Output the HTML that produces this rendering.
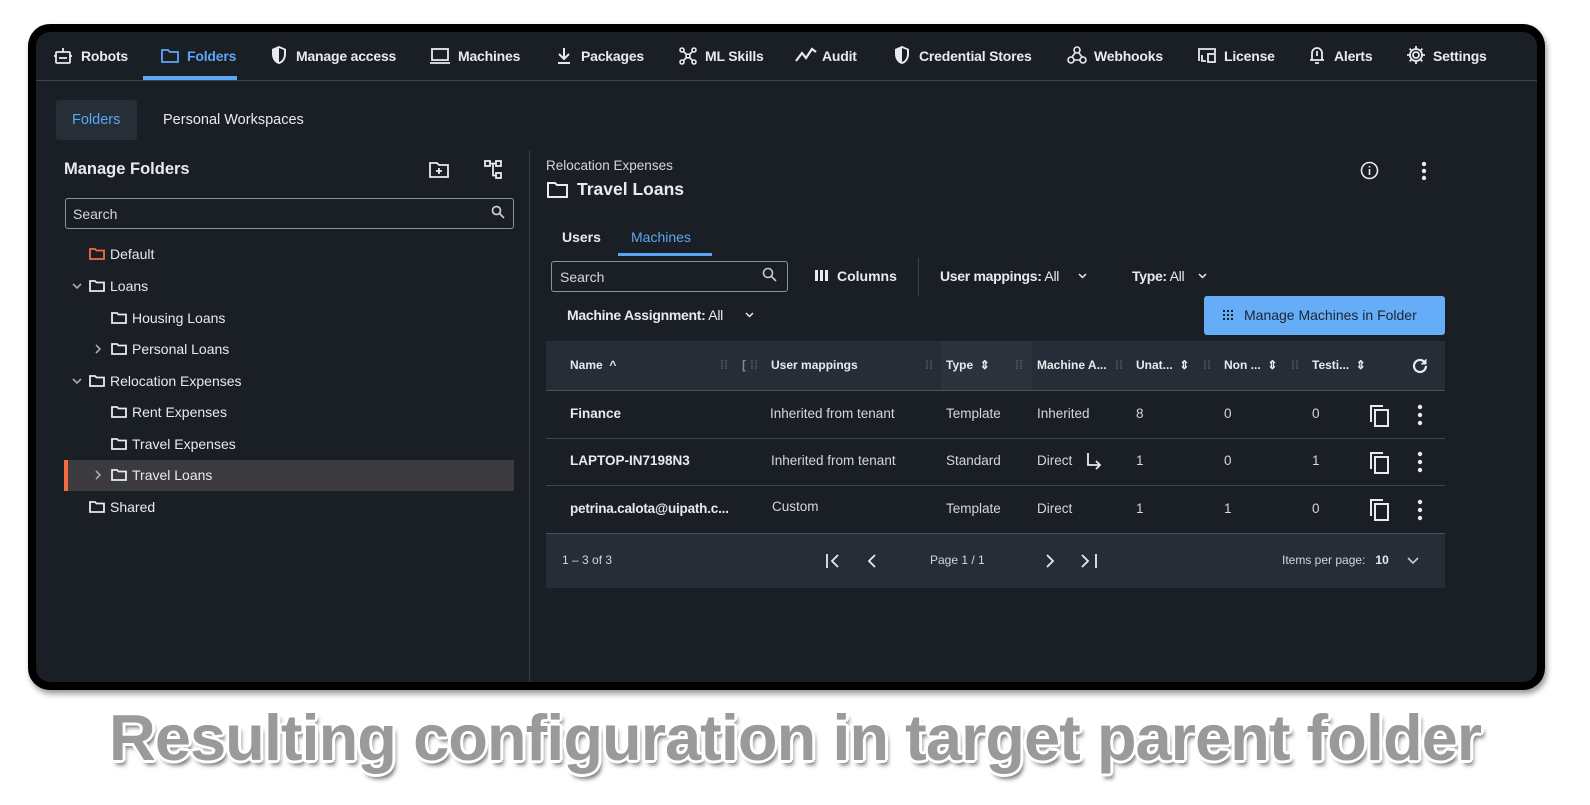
<!DOCTYPE html>
<html><head><meta charset="utf-8"><style>
*{box-sizing:border-box;margin:0;padding:0}
html,body{width:1590px;height:805px;overflow:hidden;background:#fff}
#root{position:relative;width:1590px;height:805px;overflow:hidden;background:#fff;font-family:"Liberation Sans",sans-serif;color:#e8eaed}
.frame{position:absolute;left:28px;top:24px;width:1517px;height:666px;background:#000;border-radius:22px;box-shadow:2px 4px 6px rgba(0,0,0,.4)}
.app{position:absolute;left:36px;top:32px;width:1501px;height:650px;background:#1a1f26;border-radius:14px;overflow:hidden}
.a{position:absolute;white-space:nowrap}
.nav{font-size:14px;font-weight:bold;color:#e8eaed;top:48px;letter-spacing:-0.2px}
svg{position:absolute}
.tree{font-size:14px;color:#e8eaed}
.th{font-size:12px;font-weight:bold;color:#e8eaed;top:358px}
.td{font-size:13.5px;color:#d4d7db}
.sep{position:absolute;height:1px;background:#3a434e}
</style></head><body><div id="root">
<div class="frame"></div>
<div class="app"></div>

<svg style="left:53px;top:46px" width="20" height="20" viewBox="0 0 20 20" fill="none" stroke="#e8eaed" stroke-width="1.8"><rect x="3" y="6" width="14" height="11" rx="1"/><line x1="10" y1="2" x2="10" y2="6"/><line x1="6" y1="12" x2="14" y2="12"/><line x1="1" y1="10" x2="3" y2="10"/><line x1="17" y1="10" x2="19" y2="10"/></svg>
<div class="a nav" style="left:81px">Robots</div>
<svg style="left:160px;top:47px" width="20" height="18" viewBox="0 0 20 18" fill="none" stroke="#5aa7f5" stroke-width="1.8"><path d="M2 3h6l2 2h8v10H2z"/></svg>
<div class="a nav" style="left:187px;color:#5aa7f5">Folders</div>
<div class="a" style="left:143px;top:76px;width:94px;height:4px;background:#5aa7f5"></div>
<svg style="left:270px;top:45px" width="18" height="20" viewBox="0 0 18 20"><path d="M9 1L2 4v5c0 5 3 9 7 10 4-1 7-5 7-10V4z" fill="#e8eaed"/><path d="M9 3v14c3-1 5-4 5-8V5z" fill="#1a1f26"/></svg>
<div class="a nav" style="left:296px">Manage access</div>
<svg style="left:429px;top:47px" width="22" height="18" viewBox="0 0 22 18" fill="none" stroke="#e8eaed" stroke-width="1.8"><rect x="3" y="2" width="16" height="11"/><line x1="1" y1="16" x2="21" y2="16"/></svg>
<div class="a nav" style="left:458px">Machines</div>
<svg style="left:556px;top:46px" width="16" height="20" viewBox="0 0 16 20" fill="none" stroke="#e8eaed" stroke-width="2"><path d="M8 2v10M3 8l5 5 5-5M2 17h12"/></svg>
<div class="a nav" style="left:581px">Packages</div>
<svg style="left:678px;top:46px" width="20" height="20" viewBox="0 0 20 20" fill="none" stroke="#e8eaed" stroke-width="1.6"><circle cx="4" cy="4" r="2"/><circle cx="16" cy="4" r="2"/><circle cx="10" cy="10" r="2"/><circle cx="4" cy="16" r="2"/><circle cx="16" cy="16" r="2"/><path d="M5.5 5.5l3 3M14.5 5.5l-3 3M5.5 14.5l3-3M14.5 14.5l-3-3"/></svg>
<div class="a nav" style="left:705px">ML Skills</div>
<svg style="left:795px;top:47px" width="22" height="16" viewBox="0 0 22 16" fill="none" stroke="#e8eaed" stroke-width="2.2"><path d="M1 14l6-8 4 5 6-9 4 3"/></svg>
<div class="a nav" style="left:822px">Audit</div>
<svg style="left:893px;top:45px" width="18" height="20" viewBox="0 0 18 20"><path d="M9 1L2 4v5c0 5 3 9 7 10 4-1 7-5 7-10V4z" fill="#e8eaed"/><path d="M9 3v14c3-1 5-4 5-8V5z" fill="#1a1f26"/></svg>
<div class="a nav" style="left:919px">Credential Stores</div>
<svg style="left:1067px;top:45px" width="20" height="20" viewBox="0 0 20 20" fill="none" stroke="#e8eaed" stroke-width="1.6"><circle cx="10" cy="5" r="3"/><circle cx="4" cy="15" r="3"/><circle cx="16" cy="15" r="3"/><path d="M8 8l-3 4M12 8l3 4M7 15h6"/></svg>
<div class="a nav" style="left:1094px">Webhooks</div>
<svg style="left:1196px;top:46px" width="22" height="18" viewBox="0 0 22 18" fill="none" stroke="#e8eaed" stroke-width="1.8"><path d="M3 15V3h16v4"/><rect x="12" y="8" width="7" height="8"/><path d="M6 9v6h4"/></svg>
<div class="a nav" style="left:1224px">License</div>
<svg style="left:1308px;top:45px" width="18" height="20" viewBox="0 0 18 20" fill="none" stroke="#e8eaed" stroke-width="1.8"><path d="M4 15V8a5 5 0 0 1 10 0v7M2 15h14M7 18h4M9 6v5"/></svg>
<div class="a nav" style="left:1334px">Alerts</div>
<svg style="left:1406px;top:45px" width="20" height="20" viewBox="0 0 20 20" fill="none" stroke="#e8eaed" stroke-width="1.8"><circle cx="10" cy="10" r="3"/><path d="M10 1v3M10 16v3M1 10h3M16 10h3M3.6 3.6l2.1 2.1M14.3 14.3l2.1 2.1M3.6 16.4l2.1-2.1M14.3 5.7l2.1-2.1"/><circle cx="10" cy="10" r="6"/></svg>
<div class="a nav" style="left:1433px">Settings</div>
<div class="sep" style="left:36px;top:80px;width:1501px;background:#3c4550"></div>

<div class="a" style="left:56px;top:100px;width:81px;height:40px;background:#262e38;border-radius:3px"></div>
<div class="a" style="left:72px;top:112px;font-size:14.5px;color:#5aa7f5">Folders</div>
<div class="a" style="left:163px;top:112px;font-size:14.5px;color:#e8eaed">Personal Workspaces</div>

<div class="a" style="left:64px;top:160px;font-size:16.5px;font-weight:bold">Manage Folders</div>
<svg style="left:428px;top:160px" width="22" height="20" viewBox="0 0 22 20" fill="none" stroke="#e8eaed" stroke-width="1.8"><path d="M2 3h7l2 2h9v12H2z"/><path d="M11 8v6M8 11h6"/></svg>
<svg style="left:483px;top:159px" width="22" height="22" viewBox="0 0 22 22" fill="none" stroke="#e8eaed" stroke-width="1.8"><rect x="2" y="2" width="5" height="5"/><rect x="13" y="2" width="5" height="5"/><rect x="13" y="14" width="5" height="5"/><path d="M7 4.5h6M10 4.5v12h3"/></svg>
<div class="a" style="left:65px;top:198px;width:449px;height:31px;border:1px solid #8a929c;border-radius:3px"></div>
<div class="a" style="left:73px;top:206px;font-size:14px;color:#d4d7db">Search</div>
<svg style="left:491px;top:205px" width="14" height="14" viewBox="0 0 14 14" fill="none" stroke="#c8ccd1" stroke-width="1.8"><circle cx="5.5" cy="5.5" r="4"/><path d="M8.5 8.5l4.5 4.5"/></svg>

<div class="a" style="left:64px;top:460px;width:450px;height:31px;background:#3b3a3f"></div>
<div class="a" style="left:64px;top:460px;width:4px;height:31px;background:#f26b43"></div>

<svg style="left:89px;top:247px" width="16" height="14" viewBox="0 0 16 14" fill="none" stroke="#f26b43" stroke-width="1.8"><path d="M1 2h5l1.5 1.5H15V12H1z"/></svg>
<div class="a tree" style="left:110px;top:246px">Default</div>
<svg style="left:72px;top:283px" width="10" height="7" viewBox="0 0 10 7" fill="none" stroke="#aaa" stroke-width="1.6"><path d="M1 1l4 4 4-4"/></svg>
<svg style="left:89px;top:279px" width="16" height="14" viewBox="0 0 16 14" fill="none" stroke="#e8eaed" stroke-width="1.8"><path d="M1 2h5l1.5 1.5H15V12H1z"/></svg>
<div class="a tree" style="left:110px;top:278px">Loans</div>
<svg style="left:111px;top:311px" width="16" height="14" viewBox="0 0 16 14" fill="none" stroke="#e8eaed" stroke-width="1.8"><path d="M1 2h5l1.5 1.5H15V12H1z"/></svg>
<div class="a tree" style="left:132px;top:310px">Housing Loans</div>
<svg style="left:95px;top:344px" width="7" height="10" viewBox="0 0 7 10" fill="none" stroke="#aaa" stroke-width="1.6"><path d="M1 1l4 4-4 4"/></svg>
<svg style="left:111px;top:342px" width="16" height="14" viewBox="0 0 16 14" fill="none" stroke="#e8eaed" stroke-width="1.8"><path d="M1 2h5l1.5 1.5H15V12H1z"/></svg>
<div class="a tree" style="left:132px;top:341px">Personal Loans</div>
<svg style="left:72px;top:378px" width="10" height="7" viewBox="0 0 10 7" fill="none" stroke="#aaa" stroke-width="1.6"><path d="M1 1l4 4 4-4"/></svg>
<svg style="left:89px;top:374px" width="16" height="14" viewBox="0 0 16 14" fill="none" stroke="#e8eaed" stroke-width="1.8"><path d="M1 2h5l1.5 1.5H15V12H1z"/></svg>
<div class="a tree" style="left:110px;top:373px">Relocation Expenses</div>
<svg style="left:111px;top:405px" width="16" height="14" viewBox="0 0 16 14" fill="none" stroke="#e8eaed" stroke-width="1.8"><path d="M1 2h5l1.5 1.5H15V12H1z"/></svg>
<div class="a tree" style="left:132px;top:404px">Rent Expenses</div>
<svg style="left:111px;top:437px" width="16" height="14" viewBox="0 0 16 14" fill="none" stroke="#e8eaed" stroke-width="1.8"><path d="M1 2h5l1.5 1.5H15V12H1z"/></svg>
<div class="a tree" style="left:132px;top:436px">Travel Expenses</div>
<svg style="left:95px;top:470px" width="7" height="10" viewBox="0 0 7 10" fill="none" stroke="#aaa" stroke-width="1.6"><path d="M1 1l4 4-4 4"/></svg>
<svg style="left:111px;top:468px" width="16" height="14" viewBox="0 0 16 14" fill="none" stroke="#e8eaed" stroke-width="1.8"><path d="M1 2h5l1.5 1.5H15V12H1z"/></svg>
<div class="a tree" style="left:132px;top:467px">Travel Loans</div>
<svg style="left:89px;top:500px" width="16" height="14" viewBox="0 0 16 14" fill="none" stroke="#e8eaed" stroke-width="1.8"><path d="M1 2h5l1.5 1.5H15V12H1z"/></svg>
<div class="a tree" style="left:110px;top:499px">Shared</div>

<div class="a" style="left:529px;top:150px;width:1px;height:532px;background:#353d47"></div>

<div class="a" style="left:546px;top:158px;font-size:13.5px;color:#d4d7db">Relocation Expenses</div>
<svg style="left:547px;top:181px" width="22" height="18" viewBox="0 0 22 18" fill="none" stroke="#e8eaed" stroke-width="2"><path d="M1 2h7l2 2h10v12H1z"/></svg>
<div class="a" style="left:577px;top:179px;font-size:17.5px;font-weight:bold">Travel Loans</div>
<svg style="left:1360px;top:161px" width="19" height="19" viewBox="0 0 19 19" fill="none" stroke="#e8eaed" stroke-width="1.6"><circle cx="9.5" cy="9.5" r="8"/><path d="M9.5 8v6M9.5 5v1.5"/></svg>
<svg style="left:1420px;top:160px" width="8" height="22" viewBox="0 0 8 22" fill="#e8eaed"><circle cx="4" cy="4" r="2.2"/><circle cx="4" cy="11" r="2.2"/><circle cx="4" cy="18" r="2.2"/></svg>

<div class="a" style="left:562px;top:229px;font-size:14px;font-weight:bold">Users</div>
<div class="a" style="left:631px;top:229px;font-size:14px;color:#5aa7f5">Machines</div>
<div class="a" style="left:618px;top:253px;width:94px;height:3px;background:#5aa7f5"></div>

<div class="a" style="left:551px;top:261px;width:237px;height:31px;border:1px solid #8a929c;border-radius:3px"></div>
<div class="a" style="left:560px;top:269px;font-size:14px;color:#d4d7db">Search</div>
<svg style="left:762px;top:267px" width="15" height="15" viewBox="0 0 15 15" fill="none" stroke="#c8ccd1" stroke-width="1.6"><circle cx="6" cy="6" r="4.5"/><path d="M9.5 9.5l4.5 4.5"/></svg>
<svg style="left:815px;top:270px" width="13" height="11" viewBox="0 0 13 11" fill="#e8eaed"><rect x="0" y="0" width="3" height="11"/><rect x="5" y="0" width="3" height="11"/><rect x="10" y="0" width="3" height="11"/></svg>
<div class="a" style="left:837px;top:268px;font-size:14px;font-weight:bold">Columns</div>
<div class="a" style="left:918px;top:258px;width:1px;height:38px;background:#3a434e"></div>
<div class="a" style="left:940px;top:268px;font-size:14px;letter-spacing:-0.3px"><b>User mappings:</b> All</div>
<svg style="left:1078px;top:273px" width="9" height="6" viewBox="0 0 9 6" fill="none" stroke="#e8eaed" stroke-width="1.5"><path d="M1 1l3.5 3.5L8 1"/></svg>
<div class="a" style="left:1132px;top:268px;font-size:14px;letter-spacing:-0.3px"><b>Type:</b> All</div>
<svg style="left:1198px;top:273px" width="9" height="6" viewBox="0 0 9 6" fill="none" stroke="#e8eaed" stroke-width="1.5"><path d="M1 1l3.5 3.5L8 1"/></svg>
<div class="a" style="left:567px;top:307px;font-size:14px;letter-spacing:-0.3px"><b>Machine Assignment:</b> All</div>
<svg style="left:745px;top:312px" width="9" height="6" viewBox="0 0 9 6" fill="none" stroke="#e8eaed" stroke-width="1.5"><path d="M1 1l3.5 3.5L8 1"/></svg>
<div class="a" style="left:1204px;top:296px;width:241px;height:39px;background:#66adf7;border-radius:3px"></div>
<svg style="left:1223px;top:310px" width="10" height="10" viewBox="0 0 10 10" fill="#1a1f26"><rect x="0" y="0" width="2" height="2"/><rect x="4" y="0" width="2" height="2"/><rect x="8" y="0" width="2" height="2"/><rect x="0" y="4" width="2" height="2"/><rect x="4" y="4" width="2" height="2"/><rect x="8" y="4" width="2" height="2"/><rect x="0" y="8" width="2" height="2"/><rect x="4" y="8" width="2" height="2"/><rect x="8" y="8" width="2" height="2"/></svg>
<div class="a" style="left:1244px;top:307px;font-size:14px;color:#1d2530">Manage Machines in Folder</div>

<div class="a" style="left:546px;top:341px;width:899px;height:49px;background:#262d36"></div>
<div class="a" style="left:941px;top:341px;width:91px;height:49px;background:#2c333c"></div>
<div class="sep" style="left:546px;top:390px;width:899px;background:#4a535d"></div>
<div class="a th" style="left:570px">Name &nbsp;^</div>
<div class="a th" style="left:742px;color:#888">[</div>
<div class="a th" style="left:771px">User mappings</div>
<div class="a th" style="left:946px">Type &nbsp;⇕</div>
<div class="a th" style="left:1037px">Machine A...</div>
<div class="a th" style="left:1136px">Unat... &nbsp;⇕</div>
<div class="a th" style="left:1224px">Non ... &nbsp;⇕</div>
<div class="a th" style="left:1312px">Testi... &nbsp;⇕</div>
<div class="a th" style="left:720px;color:#555">⁞⁞</div>
<div class="a th" style="left:750px;color:#555">⁞⁞</div>
<div class="a th" style="left:925px;color:#555">⁞⁞</div>
<div class="a th" style="left:1015px;color:#555">⁞⁞</div>
<div class="a th" style="left:1115px;color:#555">⁞⁞</div>
<div class="a th" style="left:1203px;color:#555">⁞⁞</div>
<div class="a th" style="left:1291px;color:#555">⁞⁞</div>
<svg style="left:1411px;top:357px" width="18" height="18" viewBox="0 0 18 18" fill="none" stroke="#e8eaed" stroke-width="2.2"><path d="M15 9a6 6 0 1 1-2-4.5"/><path d="M15 2v5h-5" fill="#e8eaed" stroke-width="1"/></svg>

<div class="a td" style="left:570px;top:406px;font-weight:bold;color:#e8eaed">Finance</div>
<div class="a td" style="left:770px;top:406px">Inherited from tenant</div>
<div class="a td" style="left:946px;top:406px">Template</div>
<div class="a td" style="left:1037px;top:406px">Inherited</div>
<div class="a td" style="left:1136px;top:406px">8</div>
<div class="a td" style="left:1224px;top:406px">0</div>
<div class="a td" style="left:1312px;top:406px">0</div>
<div class="sep" style="left:546px;top:438px;width:899px;background:#3e4751"></div>

<div class="a td" style="left:570px;top:453px;font-weight:bold;color:#e8eaed">LAPTOP-IN7198N3</div>
<div class="a td" style="left:771px;top:453px">Inherited from tenant</div>
<div class="a td" style="left:946px;top:453px">Standard</div>
<div class="a td" style="left:1037px;top:453px">Direct</div>
<svg style="left:1085px;top:452px" width="18" height="20" viewBox="0 0 18 20" fill="none" stroke="#e8eaed" stroke-width="1.8"><path d="M3 1v12h12M11 9l4 4-4 4"/></svg>
<div class="a td" style="left:1136px;top:453px">1</div>
<div class="a td" style="left:1224px;top:453px">0</div>
<div class="a td" style="left:1312px;top:453px">1</div>
<div class="sep" style="left:546px;top:485px;width:899px;background:#3e4751"></div>

<div class="a td" style="left:570px;top:501px;font-weight:bold;color:#e8eaed;letter-spacing:-0.2px">petrina.calota@uipath.c...</div>
<div class="a td" style="left:772px;top:499px">Custom</div>
<div class="a td" style="left:946px;top:501px">Template</div>
<div class="a td" style="left:1037px;top:501px">Direct</div>
<div class="a td" style="left:1136px;top:501px">1</div>
<div class="a td" style="left:1224px;top:501px">1</div>
<div class="a td" style="left:1312px;top:501px">0</div>

<svg style="left:1369px;top:404px" width="22" height="24" viewBox="0 0 22 24" fill="none" stroke="#e8eaed" stroke-width="2"><path d="M2 18V2h12"/><rect x="6" y="6" width="13" height="16"/></svg>
<svg style="left:1369px;top:451px" width="22" height="24" viewBox="0 0 22 24" fill="none" stroke="#e8eaed" stroke-width="2"><path d="M2 18V2h12"/><rect x="6" y="6" width="13" height="16"/></svg>
<svg style="left:1369px;top:498px" width="22" height="24" viewBox="0 0 22 24" fill="none" stroke="#e8eaed" stroke-width="2"><path d="M2 18V2h12"/><rect x="6" y="6" width="13" height="16"/></svg>
<svg style="left:1416px;top:404px" width="8" height="22" viewBox="0 0 8 22" fill="#e8eaed"><circle cx="4" cy="3" r="2.2"/><circle cx="4" cy="11" r="2.2"/><circle cx="4" cy="19" r="2.2"/></svg>
<svg style="left:1416px;top:451px" width="8" height="22" viewBox="0 0 8 22" fill="#e8eaed"><circle cx="4" cy="3" r="2.2"/><circle cx="4" cy="11" r="2.2"/><circle cx="4" cy="19" r="2.2"/></svg>
<svg style="left:1416px;top:499px" width="8" height="22" viewBox="0 0 8 22" fill="#e8eaed"><circle cx="4" cy="3" r="2.2"/><circle cx="4" cy="11" r="2.2"/><circle cx="4" cy="19" r="2.2"/></svg>

<div class="a" style="left:546px;top:533px;width:899px;height:55px;background:#262d36;border-top:1px solid #4a535d"></div>
<div class="a" style="left:562px;top:553px;font-size:12px;color:#d4d7db">1 – 3 of 3</div>
<svg style="left:825px;top:553px" width="90" height="16" viewBox="0 0 90 16" fill="none" stroke="#e8eaed" stroke-width="1.8"><path d="M2 1v14M13 2l-6 6 6 6M50 2l-6 6 6 6"/></svg>
<div class="a" style="left:930px;top:553px;font-size:12px;color:#d4d7db">Page 1 / 1</div>
<svg style="left:1044px;top:553px" width="60" height="16" viewBox="0 0 60 16" fill="none" stroke="#e8eaed" stroke-width="1.8"><path d="M3 2l6 6-6 6M38 2l6 6-6 6M52 1v14"/></svg>
<div class="a" style="left:1282px;top:553px;font-size:12px;color:#d4d7db">Items per page: &nbsp;&nbsp;<b style="color:#e8eaed">10</b></div>
<svg style="left:1407px;top:557px" width="12" height="8" viewBox="0 0 12 8" fill="none" stroke="#c8ccd1" stroke-width="1.6"><path d="M1 1l5 5 5-5"/></svg>

<div class="a" style="left:0;width:1590px;top:700px;text-align:center;font-size:65px;font-weight:bold;letter-spacing:-1px;color:#9a9a9a;text-shadow:-2px -2px 0 #fff,2px -2px 0 #fff,-2px 2px 0 #fff,2px 2px 0 #fff,0 -3px 0 #fff,0 3px 0 #fff,-3px 0 0 #fff,3px 0 0 #fff,3px 5px 4px rgba(0,0,0,.55)">Resulting configuration in target parent folder</div>
</div></body></html>
